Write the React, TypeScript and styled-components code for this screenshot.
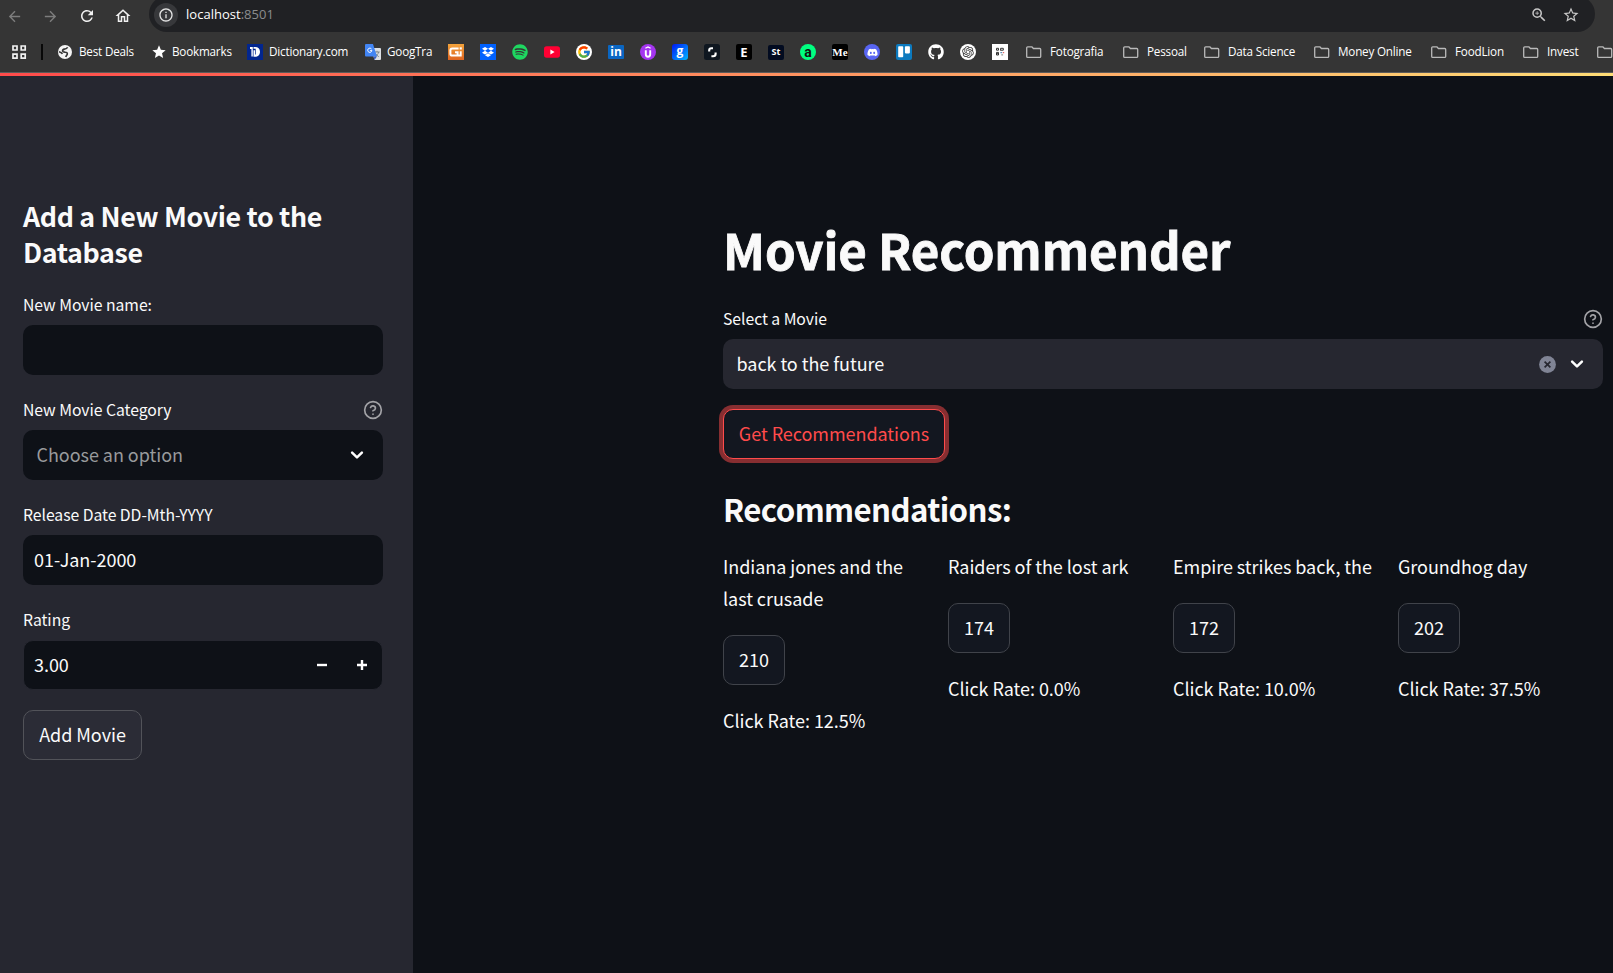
import React from "react";
import styled, { createGlobalStyle } from "styled-components";
import { FaSpotify, FaDropbox, FaDiscord, FaGithub } from "react-icons/fa";
import { FcGoogle } from "react-icons/fc";
import { RiOpenaiFill } from "react-icons/ri";
import { MdArrowBack, MdArrowForward, MdRefresh, MdOutlineHome, MdStar, MdStarBorder, MdZoomIn, MdInfoOutline } from "react-icons/md";
import { FiHelpCircle } from "react-icons/fi";

const Global = createGlobalStyle`
  * { box-sizing: border-box; }
  html, body, #root { margin: 0; height: 100%; }
  body {
    overflow: hidden;
    background: #0e1117;
    color: #fafafa;
    font-family: "Noto Sans CJK JP", "Noto Sans", sans-serif;
    font-size: 18px;
    letter-spacing: -0.045px;
  }
  h1, h2, p { margin: 0; }
  button, input { font: inherit; color: inherit; letter-spacing: inherit; }
  svg { display: block; flex: none; }
`;

const Page = styled.div`
  display: flex;
  flex-direction: column;
  height: 973px;
  width: 1613px;
  overflow: hidden;
`;

/* Browser chrome */
const Chrome = styled.header`
  height: 73px;
  flex: none;
  background: #353535;
  border-bottom: 1px solid #5b5b5b;
  font-family: "Open Sans", "Noto Sans", sans-serif;
`;
const Toolbar = styled.div`
  display: flex;
  align-items: center;
  height: 32px;
  overflow: hidden;
  padding-left: 6px;
`;
const NavIcon = styled.span<{ $dim?: boolean }>`
  display: flex;
  width: 36px;
  height: 31px;
  align-items: center;
  color: ${(p) => (p.$dim ? "#7d7d7d" : "#f1f1f1")};
`;
const AddressBar = styled.div`
  display: flex;
  align-items: center;
  width: 1446px;
  height: 36px;
  margin: -4px 0 0 -1px;
  padding: 1px 15px 0 5px;
  border-radius: 18px;
  background: #202124;
  color: #c7c7c7;
`;
const InfoBadge = styled.span`
  display: flex;
  align-items: center;
  justify-content: center;
  width: 24px;
  height: 24px;
  border-radius: 50%;
  background: #37383b;
  color: #e3e3e3;
`;
const Url = styled.span`
  flex: 1;
  padding: 0 0 1px 8px;
  font-size: 13px;
  line-height: 20px;
  letter-spacing: 0.02px;
  color: #ffffff;
`;
const Port = styled.span`
  color: #8b8c8e;
`;
const AddressActions = styled.span`
  display: flex;
  gap: 14px;
`;
const Bookmarks = styled.nav`
  display: flex;
  align-items: center;
  height: 40px;
  padding-left: 11px;
`;
const Separator = styled.i`
  width: 2px;
  height: 16px;
  margin: 0 15px 0 14px;
  background: #080808;
`;
const Bookmark = styled.span<{ $width: number; $gap?: number }>`
  display: flex;
  flex: none;
  align-items: center;
  gap: ${(p) => p.$gap ?? 7}px;
  width: ${(p) => p.$width}px;
  color: #ffffff;
`;
const BookmarkName = styled.span`
  padding-bottom: 2px;
  font-size: 11.7px;
  line-height: 16px;
  letter-spacing: -0.2px;
  white-space: nowrap;
`;
const Tile = styled.i<{ $bg: string; $radius?: number; $color?: string; $size?: number; $font?: string; $h?: number; $lift?: number }>`
  display: flex;
  flex: none;
  align-items: center;
  justify-content: center;
  width: 16px;
  height: ${(p) => p.$h ?? 16}px;
  padding-bottom: ${(p) => p.$lift ?? 0}px;
  border-radius: ${(p) => p.$radius ?? 0}px;
  background: ${(p) => p.$bg};
  color: ${(p) => p.$color ?? "#ffffff"};
  font: 700 ${(p) => p.$size ?? 12}px/14px ${(p) => p.$font ?? '"Open Sans", sans-serif'};
  letter-spacing: 0;
`;

/* Application */
const Accent = styled.div`
  height: 3px;
  flex: none;
  background: linear-gradient(90deg, #ff4b4b, #ffdd76);
`;
const AppBody = styled.div`
  display: flex;
  flex: 1;
  min-height: 0;
`;
const Sidebar = styled.aside`
  width: 413px;
  flex: none;
  padding: 122px 30px 0 23px;
  background: #262730;
`;
const SideTitle = styled.h2`
  height: 72px;
  margin: 0 0 21px;
  font-size: 26.8px;
  font-weight: 600;
  line-height: 36px;
  letter-spacing: -0.35px;
`;
const Field = styled.div`
  height: 105px;

  &:last-of-type {
    height: 104px;
  }
`;
const LabelRow = styled.div`
  display: flex;
  align-items: center;
  justify-content: space-between;
  height: 34px;
  padding-bottom: 7px;
  font-size: 15.75px;
  line-height: 24px;
  color: #fafafa;
`;
const HelpMark = styled(FiHelpCircle)`
  width: 20px;
  height: 20px;
  color: #a3a3a7;
`;
const Control = styled.div<{ $tone?: "light"; $pad?: number; $inset?: boolean; $muted?: boolean }>`
  display: flex;
  align-items: center;
  height: 50px;
  padding: 0 16px 0 ${(p) => p.$pad ?? 11}px;
  border: ${(p) => (p.$inset ? "1px solid #262730" : "0")};
  border-radius: 10px;
  background: ${(p) => (p.$tone === "light" ? "#262730" : "#0e1117")};
  color: ${(p) => (p.$muted ? "#989a9c" : "#fafafa")};
  line-height: 28px;
`;
const Value = styled.span`
  flex: 1;
  padding-bottom: 2px;
`;
const Stepper = styled.span`
  display: flex;
  gap: 26px;
  margin-right: -3px;
`;
const Indicators = styled.span`
  display: flex;
  align-items: center;
  gap: 11.5px;
`;
const Button = styled.button<{ $side?: boolean; $focused?: boolean; $width: number }>`
  display: flex;
  align-items: center;
  justify-content: center;
  width: ${(p) => p.$width}px;
  height: 50px;
  padding: 0 0 2px;
  border: 1px solid ${(p) => (p.$focused ? "#ff4b4b" : p.$side ? "#525359" : "#40434a")};
  border-radius: 10px;
  background: ${(p) => (p.$side ? "#2b2c36" : "#131720")};
  box-shadow: ${(p) => (p.$focused ? "0 0 0 4px rgba(255, 75, 75, 0.5)" : "none")};
  color: ${(p) => (p.$focused ? "#ff4b4b" : "#fafafa")};
  line-height: 30px;
`;
const Main = styled.main`
  flex: 1;
  padding: 140px 10px 0 310px;
`;
const Title = styled.h1`
  height: 66px;
  margin-bottom: 23px;
  font-size: 49.2px;
  font-weight: 700;
  line-height: 66px;
  letter-spacing: -0.08px;
  -webkit-text-stroke: 0.8px #fafafa;
`;
const ButtonRow = styled.div`
  display: flex;
  margin: 20px 0 29px;
`;
const Heading = styled.h2`
  height: 42px;
  margin-bottom: 20px;
  font-size: 31.2px;
  font-weight: 600;
  line-height: 42px;
  letter-spacing: -0.6px;
`;
const Columns = styled.div`
  display: grid;
  grid-template-columns: repeat(4, 205px);
  column-gap: 20px;
`;
const Card = styled.article`
  display: flex;
  flex-direction: column;
  gap: 21px;
`;
const CardText = styled.p`
  line-height: 32px;

  button + & {
    margin-top: -2px;
  }
`;

const Chevron = () => (
  <svg width="20" height="20" viewBox="0 0 20 20" fill="none" stroke="#fff" strokeWidth="2.5" strokeLinecap="round" strokeLinejoin="round">
    <path d="M5.1 7.6 10 12.4l4.9-4.8" />
  </svg>
);
const ClearMark = () => (
  <svg width="17" height="17" viewBox="0 0 17 17">
    <circle cx="8.5" cy="8.5" r="8.4" fill="#808495" />
    <path d="m5.6 5.6 5.8 5.8m0-5.8-5.8 5.8" stroke="#262730" strokeWidth="1.7" />
  </svg>
);
const Minus = () => (
  <svg width="14" height="14" viewBox="0 0 14 14"><path d="M2 7h10" stroke="#fff" strokeWidth="2.4" /></svg>
);
const Plus = () => (
  <svg width="14" height="14" viewBox="0 0 14 14"><path d="M2 7h10M7 2v10" stroke="#fff" strokeWidth="2.4" /></svg>
);
const AppsGrid = () => (
  <svg width="16" height="16" viewBox="0 0 16 16" fill="none" stroke="#f1f1f1" strokeWidth="1.7">
    <path d="M2 2h4v4H2zM10.2 2h4v4h-4zM2 10.2h4v4H2zM10.2 10.2h4v4h-4z" />
  </svg>
);
const GlobeMark = () => (
  <svg width="14" height="14" viewBox="0 0 14 14">
    <circle cx="7" cy="7" r="7" fill="#f4f4f4" />
    <path d="M9.6 2.2c-.6 1.5-1.6 1.7-3.2 1.9-1.2.2-1.9 1-1.8 2 .2 1.3 1.6 1 2.8 1.1 1.5 0 2.1.7 1.9 1.9-.2 1-1.2 1.3-1.5 2.9M1 6.8c1.5.3 2.8 1 3.4 2.2" fill="none" stroke="#353535" strokeWidth="1.6" />
  </svg>
);
const DictionaryMark = () => (
  <svg width="16" height="16" viewBox="0 0 16 16">
    <path fill="#02268f" d="M0 0h16v16H0z" />
    <path fill="#fff" d="M3 3h2.8v9.6H4.4V5H3zM6.5 3h1.600c3 0 4.900 1.800 4.900 4.800s-2 5-5 5H6.500V6.200H8v4.200h.7V4.800H6.500z" />
  </svg>
);
const TranslateMark = () => (
  <svg width="16" height="16" viewBox="0 0 16 16">
    <path fill="#dcdfe3" d="M6 4h9a1 1 0 0 1 1 1v10a1 1 0 0 1-1 1H9.5z" />
    <path d="M9.5 8h5.2M12 6.8V8m1.6 0c-.4 2-1.8 3.6-3.4 4.5m.4-3c.7 1.3 1.7 2.3 3.2 3.2" stroke="#768287" strokeWidth=".9" fill="none" />
    <path fill="#4285f4" d="M1 0h7l4 12.6H1a1 1 0 0 1-1-1V1a1 1 0 0 1 1-1z" />
    <path fill="#3a5fc0" d="m8.5 12.6 1 3.4 2.5-3.4z" />
    <path d="M6.5 5a2.100 2.100 0 1 0 .4 1.600H5.100" stroke="#fff" strokeWidth="1" fill="none" />
  </svg>
);
const GMark = () => (
  <svg width="16" height="16" viewBox="0 0 16 16">
    <defs>
      <linearGradient id="gmark" x1="0" y1="0" x2="0" y2="1">
        <stop offset="0" stopColor="#f3a33b" /><stop offset="1" stopColor="#de6420" />
      </linearGradient>
    </defs>
    <path fill="url(#gmark)" d="M0 0h16v16H0z" />
    <path d="M10.600 4.400H4.300q-1.900 0-1.900 1.900v3.400q0 1.900 1.900 1.900h8.400V7.200M7 8.300h2.600v3" fill="none" stroke="#fff" strokeWidth="2" />
    <path fill="#fff" d="M11.700 3.300h2.100v2.200h-2.100z" />
  </svg>
);
const YoutubeMark = () => (
  <svg width="16" height="16" viewBox="0 0 16 16">
    <rect y="2.2" width="16" height="11.5" rx="2.6" fill="#ff0033" />
    <path fill="#fff" d="m6.4 5.6 4.2 2.4-4.2 2.4z" />
  </svg>
);
const UdemyMark = () => (
  <svg width="16" height="16" viewBox="0 0 16 16" fill="none" stroke="#fff">
    <circle cx="8" cy="8" r="8" fill="#a435f0" stroke="none" />
    <path d="M5.4 4.3 8 2.9l2.600 1.400" strokeWidth="1.2" />
    <path d="M5.8 6.3v4q0 2.400 2.200 2.400t2.200-2.400v-4" strokeWidth="1.9" />
  </svg>
);
const SwirlMark = () => (
  <svg width="16" height="16" viewBox="0 0 16 16" fill="none" stroke="#fff" strokeWidth="2.1">
    <rect width="16" height="16" rx="2.5" fill="#0f1720" stroke="none" />
    <path d="M9 4.200H7.400Q5.200 4.200 5.200 6.200v1.400M7.400 12.200h1.800q2.400 0 2.400-2.200V8.400" />
  </svg>
);
const TrelloMark = () => (
  <svg width="16" height="16" viewBox="0 0 16 16">
    <rect width="16" height="16" rx="2" fill="#0c7abf" />
    <rect x="2.2" y="2.2" width="5" height="11" rx=".8" fill="#fff" />
    <rect x="8.9" y="2.2" width="5" height="7.2" rx=".8" fill="#fff" />
  </svg>
);
const PixelMark = () => (
  <svg width="16" height="16" viewBox="0 0 16 16" fill="none" strokeWidth="1">
    <path fill="#fff" d="M0 0h16v16H0z" />
    <path d="M4.500 4.300h2v1.900h-2zM8.600 6.700V4.300h2.700v1.900H9M4.500 8.400h2v2.600h-2zM4.500 9.700h2" stroke="#333" />
    <path d="M8.400 8.700h1.800" stroke="#3377aa" /><path d="M10.800 8.700h1.400" stroke="#dd4444" /><path d="M9.300 10.900h1.800" stroke="#777777" />
  </svg>
);
const Folder = () => (
  <svg width="16" height="16" viewBox="0 0 16 16" fill="none" stroke="#b9b9b9" strokeWidth="1.3" strokeLinejoin="round">
    <path d="M1.700 2.800h4.100l1.600 1.700h6.300q1 0 1 1v6.900q0 1-1 1h-12q-1 0-1-1V3.800q0-1 1-1z" />
  </svg>
);

const shortcuts: React.ReactNode[] = [
  <GMark />,
  <Tile $bg="#0061fe"><FaDropbox size={12} /></Tile>,
  <Tile $bg="#353535" $color="#1ed760" $radius={8}><FaSpotify size={16} /></Tile>,
  <YoutubeMark />,
  <Tile $bg="#fff" $radius={8}><FcGoogle size={14} /></Tile>,
  <Tile $bg="#0a66c2" $radius={1} $h={14} $size={12}>in</Tile>,
  <UdemyMark />,
  <Tile $bg="linear-gradient(135deg,#0018f5,#00b6ff)" $radius={3} $size={12} $lift={3}>g</Tile>,
  <SwirlMark />,
  <Tile $bg="#000" $radius={2} $size={13}>E</Tile>,
  <Tile $bg="#020b20" $radius={2} $size={9} $h={15}>St</Tile>,
  <Tile $bg="#00ff80" $color="#111" $radius={8} $size={14} $lift={1} $font='"Roboto", sans-serif'>a</Tile>,
  <Tile $bg="#000" $radius={2} $size={11} $font='"Liberation Serif", serif'>Me</Tile>,
  <Tile $bg="#5865f2" $radius={8}><FaDiscord size={11} /></Tile>,
  <TrelloMark />,
  <FaGithub size={16} color="#fff" />,
  <Tile $bg="#fff" $color="#333" $radius={8}><RiOpenaiFill size={14} /></Tile>,
  <PixelMark />,
];

const folders = [
  { name: "Fotografia", width: 97 },
  { name: "Pessoal", width: 81 },
  { name: "Data Science", width: 110 },
  { name: "Money Online", width: 117 },
  { name: "FoodLion", width: 92 },
  { name: "Invest", width: 74 },
  { name: "", width: 16 },
];

const movies = [
  { title: "Indiana jones and the last crusade", id: 210, rate: "12.5%" },
  { title: "Raiders of the lost ark", id: 174, rate: "0.0%" },
  { title: "Empire strikes back, the", id: 172, rate: "10.0%" },
  { title: "Groundhog day", id: 202, rate: "37.5%" },
];

export default function App() {
  return (
    <Page>
      <Global />
      <Chrome>
        <Toolbar>
          <NavIcon $dim><MdArrowBack size={17} /></NavIcon>
          <NavIcon $dim><MdArrowForward size={17} /></NavIcon>
          <NavIcon><MdRefresh size={18} /></NavIcon>
          <NavIcon><MdOutlineHome size={18} /></NavIcon>
          <AddressBar>
            <InfoBadge><MdInfoOutline size={16} /></InfoBadge>
            <Url>localhost<Port>:8501</Port></Url>
            <AddressActions>
              <MdZoomIn size={18} />
              <MdStarBorder size={18} />
            </AddressActions>
          </AddressBar>
        </Toolbar>
        <Bookmarks>
          <AppsGrid />
          <Separator />
          <Bookmark $width={93}><GlobeMark /><BookmarkName>Best Deals</BookmarkName></Bookmark>
          <Bookmark $width={96} $gap={5}><MdStar size={16} /><BookmarkName>Bookmarks</BookmarkName></Bookmark>
          <Bookmark $width={118} $gap={6}><DictionaryMark /><BookmarkName>Dictionary.com</BookmarkName></Bookmark>
          <Bookmark $width={83} $gap={6}><TranslateMark /><BookmarkName>GoogTra</BookmarkName></Bookmark>
          {shortcuts.map((icon, i) => (
            <Bookmark key={i} $width={i === shortcuts.length - 1 ? 34 : 32}>{icon}</Bookmark>
          ))}
          {folders.map((f, i) => (
            <Bookmark key={i} $width={f.width} $gap={8}>
              <Folder />
              {f.name && <BookmarkName>{f.name}</BookmarkName>}
            </Bookmark>
          ))}
        </Bookmarks>
      </Chrome>
      <Accent />
      <AppBody>
        <Sidebar>
          <SideTitle>Add a New Movie to the Database</SideTitle>
          <Field>
            <LabelRow>New Movie name:</LabelRow>
            <Control />
          </Field>
          <Field>
            <LabelRow>New Movie Category<HelpMark /></LabelRow>
            <Control $pad={13.5} $muted><Value>Choose an option</Value><Chevron /></Control>
          </Field>
          <Field>
            <LabelRow>Release Date DD-Mth-YYYY</LabelRow>
            <Control><Value>01-Jan-2000</Value></Control>
          </Field>
          <Field>
            <LabelRow>Rating</LabelRow>
            <Control $inset $pad={10}><Value>3.00</Value><Stepper><Minus /><Plus /></Stepper></Control>
          </Field>
          <Button $side $width={119}>Add Movie</Button>
        </Sidebar>
        <Main>
          <Title>Movie Recommender</Title>
          <LabelRow>Select a Movie<HelpMark /></LabelRow>
          <Control $tone="light" $pad={13.5}>
            <Value>back to the future</Value>
            <Indicators>
              <ClearMark />
              <Chevron />
            </Indicators>
          </Control>
          <ButtonRow><Button $focused $width={222}>Get Recommendations</Button></ButtonRow>
          <Heading>Recommendations:</Heading>
          <Columns>
            {movies.map((m) => (
              <Card key={m.id}>
                <CardText>{m.title}</CardText>
                <Button $width={62}>{m.id}</Button>
                <CardText>Click Rate: {m.rate}</CardText>
              </Card>
            ))}
          </Columns>
        </Main>
      </AppBody>
    </Page>
  );
}
